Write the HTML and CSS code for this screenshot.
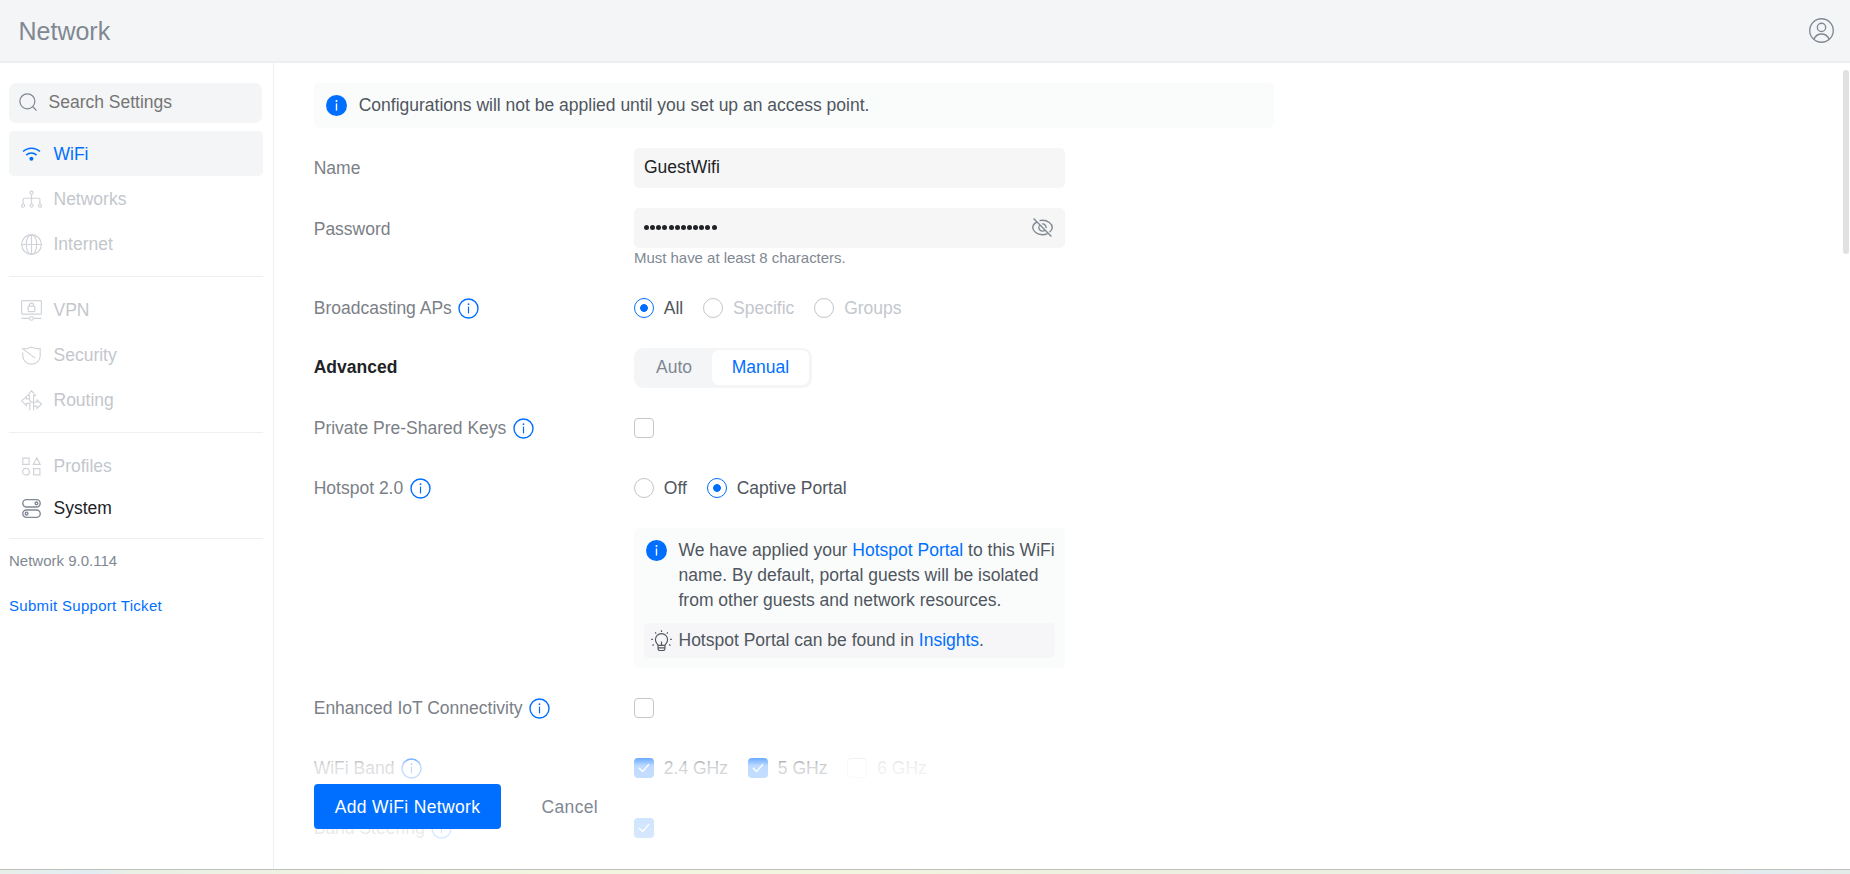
FILE: index.html
```html
<!DOCTYPE html>
<html lang="en">
<head>
<meta charset="utf-8">
<title>Network</title>
<link rel="stylesheet" href="styles.css">
</head>
<body>
<svg class="defs" width="0" height="0">
  <symbol id="info" viewBox="0 0 21 21"><circle cx="10.5" cy="10.5" r="9.500" fill="none" stroke="currentColor" stroke-width="1.400"/><circle cx="10.5" cy="6.200" r=".9" fill="currentColor"/><path d="M10.5 8.600v6.800" stroke="currentColor" stroke-width="1.200"/></symbol>
  <symbol id="info-solid" viewBox="0 0 21 21"><circle cx="10.5" cy="10.5" r="10.5" fill="#006fff"/><circle cx="10.5" cy="6" r="1" fill="#fff"/><path d="M10.5 8.400v7.200" stroke="#fff" stroke-width="1.400"/></symbol>
  <symbol id="check" viewBox="0 0 20 20"><path d="M5.300 10.200l3.300 3.400 6-7" fill="none" stroke="#fff" stroke-width="1.400" stroke-linecap="round" stroke-linejoin="round"/></symbol>
</svg>
<header class="topbar">
  <h1>Network</h1>
  <svg class="user" viewBox="0 0 24 24"><circle cx="12" cy="12" r="11.300"/><circle cx="12" cy="9" r="4"/><path d="M4.700 20.300c1.400-3 4.100-4.900 7.300-4.900s5.900 1.900 7.300 4.900"/></svg>
</header>
<div class="body">
  <nav class="sidebar">
    <div class="search">
      <svg viewBox="0 0 20 20"><circle cx="8.800" cy="8.800" r="7.900"/><path d="M14.500 14.500l4 4"/></svg>
      <span>Search Settings</span>
    </div>
    <a class="item active"><svg viewBox="0 0 20 20"><path d="M2 7.200c4.400-4.300 11.600-4.300 16 0M5 10.600c2.700-2.600 7.100-2.600 9.800 0" stroke-width="1.400"/><circle cx="9.900" cy="14" r="1.900" fill="currentColor" stroke="none"/></svg>WiFi</a>
    <a class="item"><svg viewBox="0 0 20 20"><circle cx="10" cy="3.500" r="1.500"/><path d="M10 5.100v9.200M2 14.300V9.800c0-.6.400-1 1-1h14c.6 0 1 .4 1 1v4.500"/><circle cx="2" cy="15.800" r="1.500"/><circle cx="10" cy="15.800" r="1.500"/><circle cx="18" cy="15.800" r="1.500"/></svg>Networks</a>
    <a class="item"><svg viewBox="0 0 20 20"><circle cx="10" cy="10" r="9.400"/><ellipse cx="10" cy="10" rx="5" ry="9.400"/><path d="M.5 10h19M10 .5v19"/></svg>Internet</a>
    <hr>
    <a class="item"><svg viewBox="0 0 20 20"><rect x=".6" y=".6" width="18.800" height="12.900" rx="1"/><rect x="6.800" y="5.800" width="6.400" height="5.200" rx=".8"/><path d="M8 5.800V5a2 2 0 0 1 4 0v.8M.5 17.500H8M12 17.500h7.500"/><circle cx="10" cy="17.500" r="1.800"/></svg>VPN</a>
    <a class="item"><svg viewBox="0 0 20 20"><path d="M10 1.800c2.600 1.500 5.200 2 8.300 1.900v6.200c0 4.700-3.200 8.300-8.300 8.300S1.700 14.600 1.700 9.900V7.200M10 1.800C7.500 3.200 5 3.700 1.700 3.700L13.500 12.500"/></svg>Security</a>
    <a class="item"><svg viewBox="0 0 20 20"><path d="M8.400 19.500v-6.800H5.200v2.200L.6 10.400l4.600-4.200v2.300h2.900V5.200H6.500L10 .7l3.700 4.500H12v13.500M12 19.500v-4.200h3.200v2.200l4.300-4-4.300-4v2.200H10.600c-1.400 0-2.400-1-2.500-3"/></svg>Routing</a>
    <hr>
    <a class="item"><svg viewBox="0 0 20 20"><path d="M1.700 2h6v6h-6zM12 12h6v6h-6zM15 1.800L18.300 8h-6.600z"/><circle cx="4.800" cy="15" r="3.200"/></svg>Profiles</a>
    <a class="item system"><svg viewBox="0 0 20 20"><rect x="1.700" y="1.600" width="16.600" height="7" rx="3.500"/><rect x="1.700" y="11.400" width="16.600" height="7" rx="3.500"/><circle cx="14.700" cy="5.100" r="1.300"/><circle cx="5.300" cy="14.900" r="1.300"/></svg>System</a>
    <hr>
    <p class="version">Network 9.0.114</p>
    <a class="ticket">Submit Support Ticket</a>
  </nav>
  <main class="content">
    <div class="banner"><svg class="i21"><use href="#info-solid"/></svg>Configurations will not be applied until you set up an access point.</div>
    <div class="form">
      <div class="row tall"><label>Name</label><div class="field">GuestWifi</div></div>
      <div class="row tall password"><label>Password</label>
        <div>
          <div class="field"><span class="dots"><i></i><i></i><i></i><i></i><i></i><i></i><i></i><i></i><i></i><i></i><i></i><i></i></span>
            <svg class="eye" viewBox="0 0 20 20"><path d="M4.800 4.600C2.300 6 .7 8.200.7 10c0 3.500 4.300 6.900 9.300 6.900 1.700 0 3.300-.4 4.700-1.100M7.200 3.500c.9-.3 1.800-.4 2.800-.4 5 0 9.300 3.400 9.300 6.900 0 1.500-1 3.100-2.600 4.400"/><path d="M7.600 7.500a3.400 3.400 0 0 0 4.800 4.900M9.500 6.600a3.400 3.400 0 0 1 3.900 3.900M1.500 1.500l17 17"/></svg>
          </div>
          <p class="hint">Must have at least 8 characters.</p>
        </div>
      </div>
      <div class="row"><label>Broadcasting APs<svg class="i21"><use href="#info"/></svg></label>
        <div class="options"><span class="opt"><b class="radio on"></b>All</span><span class="opt off"><b class="radio"></b>Specific</span><span class="opt off"><b class="radio"></b>Groups</span></div></div>
      <div class="row tall advanced"><label class="strong">Advanced</label><div class="segment"><span>Auto</span><span class="selected">Manual</span></div></div>
      <div class="row"><label>Private Pre-Shared Keys<svg class="i21"><use href="#info"/></svg></label><b class="box"></b></div>
      <div class="row"><label>Hotspot 2.0<svg class="i21"><use href="#info"/></svg></label>
        <div class="options"><span class="opt"><b class="radio"></b>Off</span><span class="opt"><b class="radio on"></b>Captive Portal</span></div></div>
      <div class="notice">
        <div class="notice-text"><svg class="i21"><use href="#info-solid"/></svg><p>We have applied your <a>Hotspot Portal</a> to this WiFi<br>name. By default, portal guests will be isolated<br>from other guests and network resources.</p></div>
        <div class="tip"><svg viewBox="0 0 20 20"><path d="M6.700 14.600c-.2-1.300-2.500-2.300-2.500-5.300a5.800 5.800 0 0 1 11.600 0c0 3-2.300 4-2.500 5.300zM6.700 14.600v3c0 1.200.7 1.900 1.700 1.900h3.200c1 0 1.700-.7 1.700-1.900v-3M6.700 17h6.600M10 11v3.600M10 .2v1.600M4 2.300l1 1.200M16 2.300l-1 1.200M.2 9h1.600M18.200 9h1.600M1.400 14.700l1.400-.8M18.600 14.700l-1.400-.8"/></svg><p>Hotspot Portal can be found in <a>Insights</a>.</p></div>
      </div>
      <div class="row"><label>Enhanced IoT Connectivity<svg class="i21"><use href="#info"/></svg></label><b class="box"></b></div>
      <div class="row"><label>WiFi Band<svg class="i21"><use href="#info"/></svg></label>
        <div class="options bands"><span class="opt"><b class="box on"><svg><use href="#check"/></svg></b>2.4 GHz</span><span class="opt"><b class="box on"><svg><use href="#check"/></svg></b>5 GHz</span><span class="opt off"><b class="box"></b>6 GHz</span></div></div>
      <div class="row"><label>Band Steering<svg class="i21"><use href="#info"/></svg></label><b class="box on"><svg><use href="#check"/></svg></b></div>
    </div>
    <div class="actions"><button class="primary">Add WiFi Network</button><button class="cancel">Cancel</button></div>
    <div class="scrollbar"></div>
  </main>
</div>
<footer class="edge"></footer>
</body>
</html>
```

FILE: styles.css
```css
* { box-sizing: border-box; }
body { margin: 0; height: 874px; overflow: hidden; display: flex; flex-direction: column; font: 17.5px/25px "Liberation Sans", Arial, sans-serif; color: #50565e; background: #fff; }
p, h1 { margin: 0; }
svg { flex: none; fill: none; stroke: currentColor; }
.defs { position: absolute; }
.i21 { width: 21px; height: 21px; stroke: none; color: #006fff; }

.topbar { height: 63px; flex: none; padding: 0 16.5px 0 18.5px; display: flex; align-items: center; justify-content: space-between; background: #f4f5f6; border-bottom: 2px solid #eeeff1; color: #808893; }
.topbar h1 { font-size: 25px; font-weight: 400; line-height: 30px; }
.user { width: 25px; height: 25px; stroke-width: 1.300; }

.body { flex: 1; min-height: 0; display: flex; }
.sidebar { width: 274px; flex: none; padding: 20px 10px 0 9px; border-right: 1px solid #edeff0; }
.search { width: 253px; height: 40px; display: flex; align-items: center; padding: 0 10px 2px; gap: 10.5px; margin-bottom: 8px; border-radius: 7px; background: #f4f5f6; color: #757575; }
.search svg { width: 19px; height: 19px; stroke-width: 1.300; color: #808893; }
.item { height: 45px; display: flex; align-items: center; gap: 11.5px; padding: 1px 0 0 12px; border-radius: 5px; color: #c3c7cc; }
.item svg { width: 21px; height: 21px; stroke-width: 1.100; color: #d0d3d7; }
.item.active, .item.active svg { color: #006fff; }
.item.active { background: #f4f5f6; }
.item.system { height: 40px; padding-top: 0; color: #212327; }
.item.system svg { color: #808893; stroke-width: 1.300; }
.sidebar hr { margin: 10px 0; border: 0; height: 1px; background: #edeff0; }
.version, .ticket { display: block; font-size: 15px; line-height: 25px; color: #808893; }
.version { margin-top: -1px; }
.ticket { margin-top: 20px; color: #006fff; letter-spacing: .3px; }

.content { flex: 1; position: relative; padding: 20px 0 0 40px; overflow: hidden; }
.banner { width: 960px; height: 45px; display: flex; align-items: center; gap: 11.700px; padding-left: 12px; border-radius: 5px; background: #fafcfc; }
.form { padding-top: 20px; display: flex; flex-direction: column; gap: 40px; }
.row { display: grid; grid-template-columns: 320px auto; justify-content: start; align-items: center; align-content: center; height: 20px; color: #50565e; }
.row label { display: flex; align-items: center; gap: 6.500px; margin-left: -.3px; color: #7b8087; }
.row label svg { margin-top: 1px; }
.row.tall { height: 40px; }
.row.tall + .row.tall { margin-top: -20px; }
.row.password { height: 70px; margin-bottom: -20px; align-items: start; align-content: start; }
.row.advanced { margin: -10px 0; }
.password label { height: 42px; }
.row.tall .field { width: 431px; height: 40px; padding: 0 12px 2px 10px; display: flex; align-items: center; justify-content: space-between; border-radius: 5px; background: #f6f6f6; color: #212327; }
.dots { display: flex; gap: 1.150px; }
.dots i { width: 5px; height: 5px; border-radius: 50%; background: #212327; }
.eye { width: 21px; height: 21px; stroke-width: 1.300; color: #808893; }
.hint { font-size: 15px; line-height: 20px; color: #808893; letter-spacing: -.03px; }
.row .strong { padding-bottom: 2px; font-weight: 700; color: #212327; }
.options { display: flex; gap: 20px; }
.opt { display: flex; align-items: center; gap: 9.800px; }
.off { color: #c3c7cc; }
.radio, .box { display: block; width: 20px; height: 20px; border: 1px solid #c3c5ca; background: #fff; }
.radio { border-radius: 50%; }
.radio.on { border-color: #006fff; background: radial-gradient(circle, #006fff 0 3.500px, #fff 4.200px); }
.box { border-radius: 4px; }
.box.on { border: 0; background: #006fff; }
.off .box { border-color: #e6e8ea; }
.box svg { display: block; width: 20px; height: 20px; }
.segment { display: flex; width: 178px; height: 40px; padding: 2px 3px 3px 2px; border-radius: 9px; background: #f4f5f6; color: #808893; }
.segment span { width: 76px; display: flex; align-items: center; justify-content: center; border-radius: 7px; }
.segment .selected { width: 97px; background: #fff; color: #006fff; }
.notice { width: 431px; height: 140px; margin: -10px 0 -10px 320px; padding: 9px 10px 10px; border-radius: 5px; background: #fafcfc; }
.notice a { color: #006fff; }
.notice-text { display: flex; gap: 11.500px; padding: 1px 0 0 2px; white-space: nowrap; }
.notice-text svg { margin-top: 2px; }
.tip { display: flex; align-items: center; height: 35px; margin-top: 10px; padding: 0 0 1px 7px; gap: 6.500px; border-radius: 5px; background: #f6f6f8; }
.tip svg { width: 21px; height: 21px; stroke-width: 1.100; }
.actions { position: absolute; left: 0; bottom: 0; width: 1560px; height: 121px; padding: 36px 0 0 40px; display: flex; align-items: flex-start; background: linear-gradient(rgba(255,255,255,0), rgba(255,255,255,.75) 18px, rgba(255,255,255,.77) 30px, rgba(255,255,255,.88)); }
button { height: 45px; border: 0; font: inherit; letter-spacing: .35px; padding: 1px 0 0; }
.primary { width: 187px; border-radius: 4px; background: #006fff; color: #fff; }
.cancel { margin-left: 40.5px; background: none; color: #808893; }
.scrollbar { position: absolute; right: 1px; top: 7px; width: 6px; height: 184px; border-radius: 3px; background: #e1e1e1; }
.edge { flex: none; height: 5px; border-top: 1px solid #bcc0b9; background: linear-gradient(90deg, #e8efe9, #e1edf4 5%, #eaf0e5 7%, #f2f5df 30%, #f2f5df 46%, #edf0e0 60%, #ebefdf 90%, #e2ebef 95%, #e4ece9); }
```
